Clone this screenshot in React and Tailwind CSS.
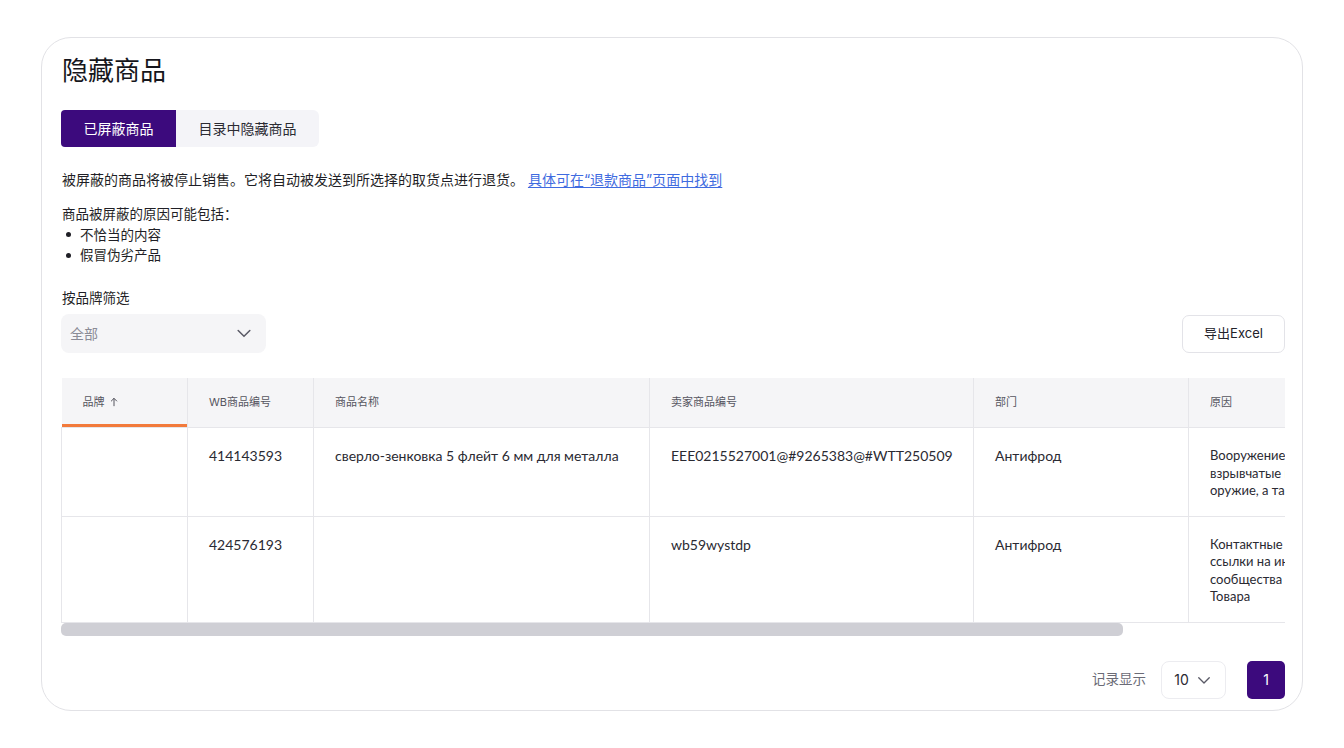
import React, { useState } from "react";

const COLUMNS = [
  { key: "brand", label: "品牌", width: 126, sortable: true },
  { key: "wb", label: "WB商品编号", width: 126 },
  { key: "name", label: "商品名称", width: 336 },
  { key: "vendor", label: "卖家商品编号", width: 324 },
  { key: "dept", label: "部门", width: 215 },
  { key: "reason", label: "原因", width: 283 },
];

const ROWS = [
  {
    brand: "",
    wb: "414143593",
    name: "сверло-зенковка 5 флейт 6 мм для металла",
    vendor: "EEE0215527001@#9265383@#WTT250509",
    dept: "Антифрод",
    reason: ["Вооружение, боеприпасы,", "взрывчатые вещества, холодное", "оружие, а также их части"],
  },
  {
    brand: "",
    wb: "424576193",
    name: "",
    vendor: "wb59wystdp",
    dept: "Антифрод",
    reason: ["Контактные данные третьих лиц,", "ссылки на интернет-ресурсы и", "сообщества вне карточки", "Товара"],
  },
];

const Chevron = ({ className = "" }) => (
  <svg viewBox="0 0 24 24" fill="none" stroke="currentColor" strokeWidth="1.8" strokeLinecap="round" strokeLinejoin="round" className={className}>
    <path d="M5 9l7 7 7-7" />
  </svg>
);

const App = () => {
  const [tab, setTab] = useState(0);

  return (
    <div
      className="min-h-[748px] bg-white px-[41px] pt-[37px] text-[#1f1f26]"
      style={{ fontFamily: "Inter, 'Noto Sans CJK SC', sans-serif" }}
    >
      <div className="w-[1262px] h-[674px] rounded-[30px] border border-[#e2e2e6] pl-[19px] pr-[17px] pt-[15px] flex flex-col">
        {/* Title */}
        <h1 className="text-[26px] leading-[36px] font-normal text-[#16161c] pl-px">隐藏商品</h1>

        {/* Tabs */}
        <div className="mt-[21px] flex">
          <button
            onClick={() => setTab(0)}
            className={`w-[115px] h-[37px] rounded-l-[4px] text-[14px] ${
              tab === 0 ? "bg-[#3c0a7d] text-white" : "bg-[#f4f4f8] text-[#2b2b33]"
            }`}
          >
            已屏蔽商品
          </button>
          <button
            onClick={() => setTab(1)}
            className={`w-[143px] h-[37px] rounded-r-[6px] text-[14px] ${
              tab === 1 ? "bg-[#3c0a7d] text-white" : "bg-[#f4f4f8] text-[#2b2b33]"
            }`}
          >
            目录中隐藏商品
          </button>
        </div>

        {/* Description */}
        <p className="mt-[23px] text-[14px] leading-[20px] text-[#1f1f26] pl-px">
          被屏蔽的商品将被停止销售。它将自动被发送到所选择的取货点进行退货。{" "}
          <a href="#" className="text-[#3f6be0] underline underline-offset-2">
            具体可在“退款商品”页面中找到
          </a>
        </p>

        <div className="mt-[14px] text-[13.5px] leading-[20.5px] pl-px">
          <p>商品被屏蔽的原因可能包括：</p>
          <ul className="pl-[4px]">
            <li className="flex items-center gap-[9px]">
              <span className="w-[5px] h-[5px] rounded-full bg-[#1f1f26]" />
              不恰当的内容
            </li>
            <li className="flex items-center gap-[9px]">
              <span className="w-[5px] h-[5px] rounded-full bg-[#1f1f26]" />
              假冒伪劣产品
            </li>
          </ul>
        </div>

        {/* Filter + export */}
        <div className="mt-[22px] flex items-end justify-between">
          <div>
            <div className="text-[13.5px] leading-[20px] pl-px">按品牌筛选</div>
            <button className="mt-[6px] w-[205px] h-[39px] rounded-[8px] bg-[#f5f5f7] flex items-center justify-between pl-[9px] pr-[12px]">
              <span className="text-[14px] text-[#8b8b96]">全部</span>
              <Chevron className="w-[20px] h-[20px] text-[#5a5a66]" />
            </button>
          </div>
          <button className="w-[103px] h-[38px] rounded-[7px] border border-[#e3e3e8] bg-white text-[13px] text-[#22222a]">
            导出Excel
          </button>
        </div>

        {/* Table */}
        <div className="mt-[25px] w-[1224px] overflow-hidden">
          <table
            className="table-fixed border-collapse w-[1410px]"
            style={{ fontFamily: "Lato, 'Noto Sans CJK SC', sans-serif" }}
          >
            <colgroup>
              {COLUMNS.map((c) => (
                <col key={c.key} style={{ width: c.width }} />
              ))}
            </colgroup>
            <thead>
              <tr className="bg-[#f5f5f7] h-[50px]">
                {COLUMNS.map((c, i) => (
                  <th
                    key={c.key}
                    className={`relative text-left font-normal text-[11px] text-[#55555f] px-[21px] border-b border-[#e6e6ea] ${
                      i > 0 ? "border-l border-l-[#e6e6ea]" : ""
                    }`}
                    style={{ fontFamily: "Inter, 'Noto Sans CJK SC', sans-serif" }}
                  >
                    <span className="flex items-center gap-[4px]">
                      {c.label}
                      {c.sortable && (
                        <svg viewBox="0 0 12 12" className="w-[10px] h-[10px]" fill="none" stroke="currentColor" strokeWidth="1.2" strokeLinecap="round">
                          <path d="M6 10.5V1.8M2.8 4.8 6 1.6l3.2 3.2" />
                        </svg>
                      )}
                    </span>
                    {c.sortable && (
                      <span className="absolute left-0 right-0 bottom-0 h-[3px] bg-[#f27a3b]" />
                    )}
                  </th>
                ))}
              </tr>
            </thead>
            <tbody>
              {ROWS.map((r, ri) => (
                <tr key={ri} className="border-b border-[#e6e6ea]">
                  {COLUMNS.map((c) => (
                    <td
                      key={c.key}
                      className={`align-top border-l border-[#e6e6ea] px-[21px] pt-[19px] pb-[16px] leading-[17.5px] text-[#2a2a32] whitespace-nowrap ${
                        c.key === "reason" ? "text-[13px]" : "text-[14px]"
                      }`}
                    >
                      {Array.isArray(r[c.key])
                        ? r[c.key].map((line, li) => <div key={li}>{line}</div>)
                        : r[c.key]}
                    </td>
                  ))}
                </tr>
              ))}
            </tbody>
          </table>
          {/* horizontal scrollbar */}
          <div className="h-[13px] w-full">
            <div className="h-[13px] w-[1062px] rounded-[5px] bg-[#cfcfd5]" />
          </div>
        </div>

        {/* Pagination */}
        <div className="mt-[25px] flex items-center justify-end">
          <span className="text-[13.5px] text-[#6b6b76]">记录显示</span>
          <button className="ml-[15px] w-[65px] h-[38px] rounded-[8px] border border-[#ececf0] flex items-center justify-center gap-[6px] text-[14px] text-[#2a2a32]">
            10
            <Chevron className="w-[18px] h-[18px] text-[#5a5a66]" />
          </button>
          <button className="ml-[21px] w-[38px] h-[38px] rounded-[5px] bg-[#3c0a7d] text-white text-[14px]">
            1
          </button>
        </div>
      </div>
    </div>
  );
};

export default App;
